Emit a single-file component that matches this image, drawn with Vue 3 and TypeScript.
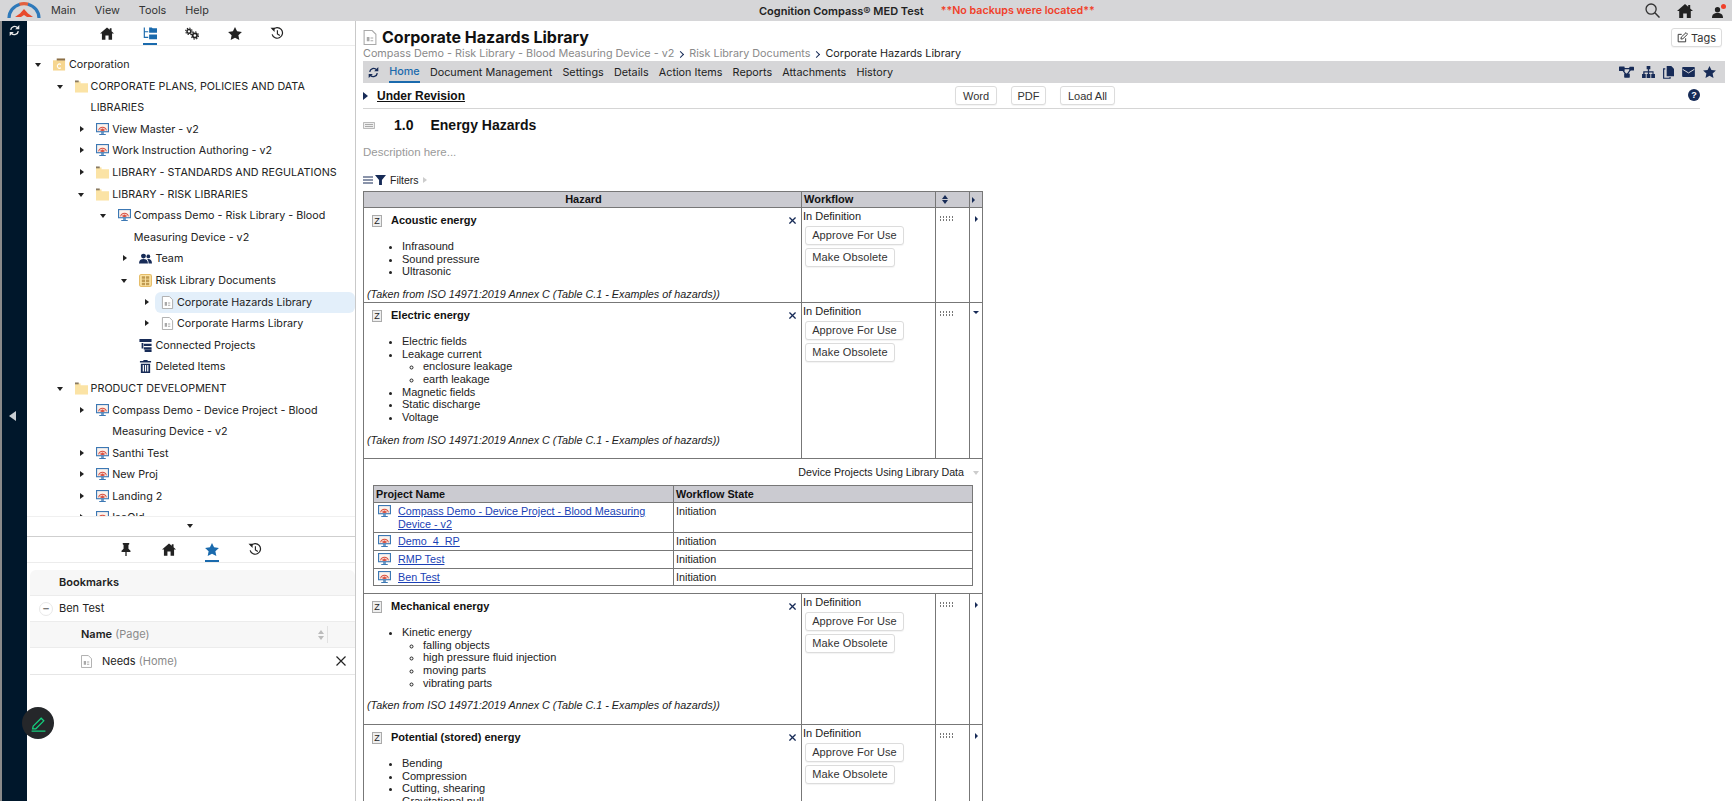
<script setup lang="ts">
interface TreeRow { level: number; arrow: '' | 'r' | 'd'; icon: string; label: string; active?: boolean }
interface ListItem { text: string; sub?: string[] }
interface Hazard { title: string; height: number; items: ListItem[]; open: boolean; note: boolean }

const menus = ['Main', 'View', 'Tools', 'Help']
const navTabs = ['Document Management', 'Settings', 'Details', 'Action Items', 'Reports', 'Attachments', 'History']
const tree: TreeRow[] = [
  { level: 0, arrow: 'd', icon: 'i-corp', label: 'Corporation' },
  { level: 1, arrow: 'd', icon: 'i-folder', label: 'CORPORATE PLANS, POLICIES AND DATA LIBRARIES' },
  { level: 2, arrow: 'r', icon: 'i-monitor', label: 'View Master - v2' },
  { level: 2, arrow: 'r', icon: 'i-monitor', label: 'Work Instruction Authoring - v2' },
  { level: 2, arrow: 'r', icon: 'i-folder', label: 'LIBRARY - STANDARDS AND REGULATIONS' },
  { level: 2, arrow: 'd', icon: 'i-folder', label: 'LIBRARY - RISK LIBRARIES' },
  { level: 3, arrow: 'd', icon: 'i-monitor', label: 'Compass Demo - Risk Library - Blood Measuring Device - v2' },
  { level: 4, arrow: 'r', icon: 'i-team', label: 'Team' },
  { level: 4, arrow: 'd', icon: 'i-docs', label: 'Risk Library Documents' },
  { level: 5, arrow: 'r', icon: 'i-doc', label: 'Corporate Hazards Library', active: true },
  { level: 5, arrow: 'r', icon: 'i-doc', label: 'Corporate Harms Library' },
  { level: 4, arrow: '', icon: 'i-conn', label: 'Connected Projects' },
  { level: 4, arrow: '', icon: 'i-trash', label: 'Deleted Items' },
  { level: 1, arrow: 'd', icon: 'i-folder', label: 'PRODUCT DEVELOPMENT' },
  { level: 2, arrow: 'r', icon: 'i-monitor', label: 'Compass Demo - Device Project - Blood Measuring Device - v2' },
  { level: 2, arrow: 'r', icon: 'i-monitor', label: 'Santhi Test' },
  { level: 2, arrow: 'r', icon: 'i-monitor', label: 'New Proj' },
  { level: 2, arrow: 'r', icon: 'i-monitor', label: 'Landing 2' },
  { level: 2, arrow: 'r', icon: 'i-monitor', label: 'IsoOld' }
]
const hazards: Hazard[] = [
  { title: 'Acoustic energy', height: 95, open: false, note: true, items: [{ text: 'Infrasound' }, { text: 'Sound pressure' }, { text: 'Ultrasonic' }] },
  { title: 'Electric energy', height: 156, open: true, note: true, items: [{ text: 'Electric fields' }, { text: 'Leakage current', sub: ['enclosure leakage', 'earth leakage'] }, { text: 'Magnetic fields' }, { text: 'Static discharge' }, { text: 'Voltage' }] },
  { title: 'Mechanical energy', height: 131, open: false, note: true, items: [{ text: 'Kinetic energy', sub: ['falling objects', 'high pressure fluid injection', 'moving parts', 'vibrating parts'] }] },
  { title: 'Potential (stored) energy', height: 131, open: false, note: false, items: [{ text: 'Bending' }, { text: 'Compression' }, { text: 'Cutting, shearing' }, { text: 'Gravitational pull' }] }
]
const projects = [
  { name: 'Compass Demo - Device Project - Blood Measuring Device - v2', h: 30 },
  { name: 'Demo_4_RP', h: 17 },
  { name: 'RMP Test', h: 17 },
  { name: 'Ben Test', h: 17 }
]
const note = '(Taken from ISO 14971:2019 Annex C (Table C.1 - Examples of hazards))'
</script>

<template>
  <div class="page">
    <svg class="defs" width="0" height="0" aria-hidden="true">
      <symbol id="i-home" viewBox="0 0 16 14"><path fill="currentColor" d="M8 0 0 7h2.200v7h4V9.400h3.600V14h4V7H16l-2.800-2.500V1h-2v1.700z"/></symbol>
      <symbol id="i-star" viewBox="0 0 16 15"><path fill="currentColor" d="m8 0 2.400 5 5.600.7-4.100 3.800 1.100 5.500L8 12.300 3 15l1.100-5.500L0 5.700 5.600 5z"/></symbol>
      <symbol id="i-tree" viewBox="0 0 16 14"><path fill="none" stroke="currentColor" stroke-width="1.300" d="M1.500 0v11.500H6M1.500 5H6"/><path fill="currentColor" d="M7 0h3l1 1h5v5H7zM7 8h9v5.500H7z"/></symbol>
      <symbol id="i-gears" viewBox="0 0 16 14">
        <circle cx="4.500" cy="4.500" r="2.200" fill="none" stroke="currentColor" stroke-width="1.700"/>
        <circle cx="4.500" cy="4.500" r="3.700" fill="none" stroke="currentColor" stroke-width="1.200" stroke-dasharray="1.500 1.400"/>
        <circle cx="11.300" cy="9.300" r="2.500" fill="none" stroke="currentColor" stroke-width="1.900"/>
        <circle cx="11.300" cy="9.300" r="4.100" fill="none" stroke="currentColor" stroke-width="1.300" stroke-dasharray="1.700 1.500"/>
      </symbol>
      <symbol id="i-history" viewBox="0 0 16 16"><path fill="none" stroke="currentColor" stroke-width="1.500" d="M3 3.500A6.500 6.500 0 1 1 2 9"/><path fill="currentColor" d="M0 1h5v5z"/><path fill="none" stroke="currentColor" stroke-width="1.400" d="M8.500 4v4.500l3 2"/></symbol>
      <symbol id="i-pin" viewBox="0 0 12 16"><path fill="currentColor" d="M2 0h8v1.500L9 2.500V7l2.500 2.500V11H6.800v5H5.200v-5H.5V9.500L3 7V2.500L2 1.500z"/></symbol>
      <symbol id="i-sync" viewBox="0 0 16 16"><path fill="none" stroke="currentColor" stroke-width="2" d="M2.500 7A5.700 5.700 0 0 1 12.500 4M13.500 9A5.700 5.700 0 0 1 3.500 12"/><path fill="currentColor" d="M15 0v6H9zM1 16v-6h6z"/></symbol>
      <symbol id="i-folder" viewBox="0 0 14 13"><path fill="#fbe3a5" d="M0 3h14v10H0z"/><path fill="#fbe3a5" d="M0 1h6v3H0z"/><path fill="#8a7a60" d="M0 0h4v2H0z"/></symbol>
      <symbol id="i-corp" viewBox="0 0 14 13"><path fill="#f6d690" d="M0 2h13v11H0z"/><path fill="#8c6f45" d="M4 0h9v2.200H4z"/><path fill="none" stroke="#fff" stroke-width="1.100" d="M8.500 6.500A2.300 2.300 0 1 0 8.500 10"/></symbol>
      <symbol id="i-monitor" viewBox="0 0 14 14"><path fill="#3c78b4" d="M0 0h14v10H0z"/><path fill="#fbf3ee" d="M1.200 1.200h11.600v7.600H1.200z"/><path fill="none" stroke="#d9503f" stroke-width="1.100" d="M2.800 8a4.300 4.300 0 0 1 8.400 0M4.800 8a2.300 2.300 0 0 1 4.400 0"/><path fill="#d9503f" d="m7 6 2 2.500H5z"/><path fill="#3c78b4" d="M5.500 10h3v1.500h-3zM3.500 11.800h7V13h-7z"/></symbol>
      <symbol id="i-team" viewBox="0 0 16 12"><circle cx="5.500" cy="3" r="3" fill="#172b57"/><path fill="#172b57" d="M0 12c0-4 2-5.500 5.500-5.500S11 8 11 12z"/><circle cx="11.500" cy="3.500" r="2.300" fill="#172b57"/><path fill="#172b57" d="M11.800 12c0-2.500-.6-4.300-1.800-5.300 3.500-.7 6 1 6 5.300z"/></symbol>
      <symbol id="i-docs" viewBox="0 0 14 14"><rect x=".6" y=".6" width="12.800" height="12.800" rx="1.800" fill="#fbe3a5" stroke="#e6bd69" stroke-width="1.200"/><path fill="#c09a51" d="M3 2.500h3.500V5H3zM7.500 2.500H11V5H7.500zM3 6h3.500v2.500H3zM7.500 6H11v2.500H7.500zM3 9.500h3.500V12H3zM7.500 9.500H11V12H7.500z"/></symbol>
      <symbol id="i-doc" viewBox="0 0 12 14"><path fill="#fff" stroke="#a9a9a9" stroke-width="1" d="M.5.500H8L11.500 4v9.500H.5z"/><path fill="#a9a9a9" d="M3 6.500h2.500v4H3zM6.500 7H9v1H6.500zM6.500 9.500H9v1H6.500z"/></symbol>
      <symbol id="i-conn" viewBox="0 0 14 15"><path fill="#172b57" d="M0 0h14v3.500H0zM2.500 4.500h2V11h-2z"/><path fill="#172b57" d="M5 5.500h9V8H5zM5 9.500h9V12H5zM6 12.500h8V15H6z"/></symbol>
      <symbol id="i-trash" viewBox="0 0 12 14"><path fill="#172b57" d="M4 0h4l.6 1.200H12v1.600H0V1.200h3.400zM1 4h10v10H1z"/><path fill="#fff" d="M3 5.500h1.300v7H3zM5.400 5.500h1.300v7H5.400zM7.800 5.500h1.300v7H7.800z"/></symbol>
      <symbol id="i-share" viewBox="0 0 16 12"><path fill="none" stroke="currentColor" stroke-width="1.300" d="M3 2.500h10M3 2.500 8 9.500M13 2.500 8 9.500"/><rect width="6" height="5" rx=".6" fill="currentColor"/><rect x="11" y=".5" width="5" height="4" rx=".6" fill="currentColor"/><rect x="5.500" y="7.500" width="6" height="4.500" rx=".6" fill="currentColor"/></symbol>
      <symbol id="i-org" viewBox="0 0 14 13"><path fill="currentColor" d="M5 0h4v3.500H7.700v2.200h4.800v3H14V13h-4V8.700h1.300V7H7.700v1.700H9V13H5V8.700h1.300V7H2.700v1.700H4V13H0V8.700h1.300v-3h5V3.500H5z"/></symbol>
      <symbol id="i-copy" viewBox="0 0 12 14"><path fill="currentColor" d="M4 0h5l3 3v8H4z"/><path fill="none" stroke="currentColor" stroke-width="1.300" d="M2.500 3H.7v10.300h7V12"/></symbol>
      <symbol id="i-mail" viewBox="0 0 14 11"><rect width="14" height="11" rx="1" fill="currentColor"/><path fill="none" stroke="#d6d6d8" stroke-width="1.100" d="m.5 2.500 6.500 4 6.500-4"/></symbol>
    </svg>

    <header class="topbar">
      <svg class="logo" viewBox="0 0 34 17">
        <path fill="none" stroke="#2e79ba" stroke-width="3.200" d="M2 16A15 14.500 0 0 1 13 2.200"/>
        <path fill="none" stroke="#e2603f" stroke-width="3.200" d="M12.500 2.300A15 14.500 0 0 1 21.500 2.300"/>
        <path fill="none" stroke="#2e79ba" stroke-width="3.200" d="M21 2.200A15 14.500 0 0 1 32 16"/>
        <path fill="#e8492c" d="m17 7 4 4.500 5 3.500H20l-3-2-3 2H8l5-3.500z"/>
      </svg>
      <nav class="menu"><span v-for="m in menus" :key="m">{{ m }}</span></nav>
      <div class="app-title">
        <strong>Cognition Compass® MED Test</strong>
        <strong class="warn">**No backups were located**</strong>
      </div>
      <div class="top-icons">
        <svg class="ic-search" viewBox="0 0 16 16"><circle cx="6.500" cy="6.500" r="5.400" fill="none" stroke="currentColor" stroke-width="1.400"/><path stroke="currentColor" stroke-width="1.600" d="m10.500 10.500 5 5"/></svg>
        <svg class="ic-home"><use href="#i-home"/></svg>
        <span class="user">
          <svg viewBox="0 0 12 12"><circle cx="6" cy="3" r="2.900" fill="currentColor"/><path fill="currentColor" d="M0 12c0-4 2-5.500 6-5.500s6 1.500 6 5.500z"/></svg>
          <i class="dot"></i>
        </span>
      </div>
    </header>

    <div class="main">
      <aside class="rail">
        <svg class="rail-sync"><use href="#i-sync"/></svg>
        <span class="rail-arrow"></span>
      </aside>

      <section class="side">
        <div class="tabs tree-tabs">
          <svg><use href="#i-home"/></svg>
          <span class="tab-on"><svg><use href="#i-tree"/></svg></span>
          <svg><use href="#i-gears"/></svg>
          <svg><use href="#i-star"/></svg>
          <svg><use href="#i-history"/></svg>
        </div>
        <div class="tree">
          <div v-for="r in tree" :key="r.label" class="node" :style="{ paddingLeft: 8 + r.level * 21.6 + 'px' }">
            <span class="arrow" :class="r.arrow"></span>
            <span class="node-body" :class="{ active: r.active }">
              <svg class="node-icon"><use :href="'#' + r.icon"/></svg>
              <span class="node-label">{{ r.label }}</span>
            </span>
          </div>
        </div>
        <div class="tree-foot"><span class="arrow d"></span></div>
        <div class="tabs book-tabs">
          <svg class="pin"><use href="#i-pin"/></svg>
          <svg><use href="#i-home"/></svg>
          <span class="tab-on blue"><svg><use href="#i-star"/></svg></span>
          <svg><use href="#i-history"/></svg>
        </div>
        <div class="bookmarks">
          <div class="b-head">Bookmarks</div>
          <div class="b-row"><span class="minus">–</span>Ben Test</div>
          <div class="b-sub">
            <span><b>Name</b> <em>(Page)</em></span>
            <span class="sort-mini"><i></i><i></i></span>
          </div>
          <div class="b-item">
            <svg class="b-doc"><use href="#i-doc"/></svg>
            <span>Needs <em>(Home)</em></span>
            <svg class="b-x" viewBox="0 0 10 10"><path stroke="currentColor" stroke-width="1.200" d="m.5.500 9 9M9.500.500l-9 9"/></svg>
          </div>
        </div>
        <div class="fab">
          <svg viewBox="0 0 16 16"><path fill="none" stroke="#14d07e" stroke-width="1.200" d="M3 10.500 10.500 3 13 5.500 5.500 13h-3zM1.500 15.200h13"/></svg>
        </div>
      </section>

      <main class="content">
        <div class="title-row">
          <svg class="title-doc"><use href="#i-doc"/></svg>
          <h1>Corporate Hazards Library</h1>
          <button class="btn tags">
            <svg viewBox="0 0 14 14"><path fill="none" stroke="currentColor" stroke-width="1.200" d="M11 8v4.500H1.500V3H6"/><path fill="none" stroke="currentColor" stroke-width="1.200" d="m5 9 .5-2.500L11.500.8l2 2-6 5.800z"/></svg>
            Tags
          </button>
        </div>
        <div class="crumbs">
          <span>Compass Demo - Risk Library - Blood Measuring Device - v2</span>
          <i class="chev"></i><span>Risk Library Documents</span>
          <i class="chev"></i><span class="cur">Corporate Hazards Library</span>
        </div>
        <nav class="navbar">
          <svg class="nav-sync"><use href="#i-sync"/></svg>
          <span class="nav-home">Home</span>
          <span v-for="t in navTabs" :key="t">{{ t }}</span>
          <div class="nav-icons">
            <svg class="a"><use href="#i-share"/></svg>
            <svg class="b"><use href="#i-org"/></svg>
            <svg class="c"><use href="#i-copy"/></svg>
            <svg class="d"><use href="#i-mail"/></svg>
            <svg class="e"><use href="#i-star"/></svg>
          </div>
        </nav>
        <div class="revision">
          <span class="tri"></span>
          <span class="rev-label">Under Revision</span>
          <div class="rev-btns">
            <button class="btn word">Word</button>
            <button class="btn pdf">PDF</button>
            <button class="btn load">Load All</button>
          </div>
          <span class="help">?</span>
        </div>
        <div class="section">
          <svg class="sec-ic" viewBox="0 0 12 7"><path fill="#eee" stroke="#aaa" stroke-width=".8" d="M.5.500h11v6H.5z"/><path stroke="#aaa" d="M2 2.500h8M2 4.500h8"/></svg>
          <span class="num">1.0</span><span>Energy Hazards</span>
        </div>
        <div class="desc">Description here...</div>
        <div class="filters">
          <svg class="burger" viewBox="0 0 10 8"><path stroke="#172b57" stroke-width="1.200" d="M0 1h10M0 4h10M0 7h10"/></svg>
          <svg class="funnel" viewBox="0 0 10 9"><path fill="#172b57" d="M0 0h10L6.300 4.500V9H3.700V4.500z"/></svg>
          <span>Filters</span>
          <span class="f-tri"></span>
        </div>

        <table class="grid">
          <colgroup><col class="c1"><col class="c2"><col class="c3"><col class="c4"></colgroup>
          <thead>
            <tr>
              <th class="center">Hazard</th><th>Workflow</th>
              <th class="sort-th"><span class="sort-big"><i></i><i></i></span></th>
              <th class="exp-th"><span class="mini-r"></span></th>
            </tr>
          </thead>
          <tbody>
            <template v-for="h in hazards" :key="h.title">
              <tr>
                <td class="hz" :style="{ height: h.height + 'px' }" :class="{ 'no-bottom': h.open }">
                  <div class="hz-head">
                    <span class="z">Z</span><b>{{ h.title }}</b>
                    <svg class="hz-x" viewBox="0 0 8 8"><path stroke="#172b57" stroke-width="1.500" d="m.5.500 7 7M7.500.500l-7 7"/></svg>
                  </div>
                  <ul>
                    <li v-for="it in h.items" :key="it.text">
                      {{ it.text }}
                      <ul v-if="it.sub"><li v-for="s in it.sub" :key="s">{{ s }}</li></ul>
                    </li>
                  </ul>
                  <p v-if="h.note" class="note">{{ note }}</p>
                </td>
                <td class="wf" :class="{ 'no-bottom': h.open }">
                  <div>In Definition</div>
                  <button class="btn wf-btn">Approve For Use</button>
                  <button class="btn wf-btn">Make Obsolete</button>
                </td>
                <td class="gr" :class="{ 'no-bottom': h.open }"><span class="grip"></span></td>
                <td class="ex" :class="{ 'no-bottom': h.open }"><span :class="h.open ? 'mini-d' : 'mini-r'"></span></td>
              </tr>
              <tr v-if="h.open">
                <td colspan="4" class="nested-cell">
                  <div class="nested-title">Device Projects Using Library Data <span class="gray-d"></span></div>
                  <table class="nested">
                    <colgroup><col class="n1"><col></colgroup>
                    <thead><tr><th>Project Name</th><th>Workflow State</th></tr></thead>
                    <tbody>
                      <tr v-for="p in projects" :key="p.name" :style="{ height: p.h + 'px' }">
                        <td class="pn"><svg class="pn-ic"><use href="#i-monitor"/></svg><a href="#">{{ p.name }}</a></td>
                        <td>Initiation</td>
                      </tr>
                    </tbody>
                  </table>
                </td>
              </tr>
            </template>
          </tbody>
        </table>
      </main>
    </div>
  </div>
</template>

<style>
html, body { margin: 0; padding: 0; background: #fff; }
</style>

<style scoped>
.page { width: 1732px; height: 801px; overflow: hidden; display: flex; flex-direction: column; font-family: Inter, "Liberation Sans", sans-serif; color: #222; background: #fff; }
.defs { position: absolute; }
svg { display: block; }

.topbar { height: 21px; flex: none; background: #d6d6d8; display: flex; align-items: center; position: relative; }
.logo { width: 34px; height: 17px; margin: 0 0 0 7px; flex: none; }
.menu { display: flex; gap: 19px; margin-left: 10px; font-size: 10.800px; color: #333; }
.app-title { position: absolute; left: 759px; display: flex; gap: 17px; align-items: center; font-size: 11px; }
.app-title strong { font-weight: 600; color: #222; }
.app-title .warn { color: #f0402a; font-weight: 600; font-size: 10.700px; }
.top-icons { position: absolute; right: 0; top: 0; height: 21px; display: flex; align-items: center; }
.ic-search { width: 15px; height: 15px; color: #333; margin-right: 17px; }
.ic-home { width: 16px; height: 14px; color: #222; margin-right: 19px; }
.user { width: 11px; height: 12px; margin-right: 9px; position: relative; color: #222; }
.user svg { width: 11px; height: 11px; margin-top: 2px; }
.dot { position: absolute; top: -1px; right: -3px; width: 5px; height: 5px; border-radius: 50%; background: #f0402a; }

.main { flex: 1; min-height: 0; display: flex; }
.rail { width: 25px; margin-left: 2px; flex: none; background: #00172b; position: relative; box-shadow: -2px 0 0 #8a8a8a; }
.rail-sync { width: 11px; height: 11px; color: #e8e8e8; position: absolute; left: 7px; top: 4px; }
.rail-arrow { position: absolute; left: 7px; top: 390px; border-style: solid; border-width: 5px 7px 5px 0; border-color: transparent #c8ced4 transparent transparent; }

.side { width: 328px; flex: none; border-right: 1px solid #c9c9c9; position: relative; display: flex; flex-direction: column; }
.tabs { flex: none; display: flex; align-items: center; position: relative; color: #222; border-bottom: 1px solid #ececec; }
.tabs svg { width: 14px; height: 13px; }
.tree-tabs { height: 24px; padding-left: 73px; gap: 28.500px; }
.tab-on { display: flex; height: 100%; align-items: center; color: #1a6aad; position: relative; }
.tab-on::after { content: ""; position: absolute; left: 0; right: 0; bottom: 0; height: 2px; background: #1a6aad; }
.tree { height: 470px; flex: none; overflow: hidden; padding-top: 8px; box-sizing: border-box; font-size: 10.750px; line-height: 21.600px; }
.node { display: flex; align-items: flex-start; }
.arrow { width: 16px; height: 21.600px; flex: none; position: relative; margin-right: 0; }
.arrow.r::before { content: ""; position: absolute; left: 2px; top: 7px; border-style: solid; border-width: 3.500px 0 3.500px 4px; border-color: transparent transparent transparent #222; }
.arrow.d::before { content: ""; position: absolute; left: 0; top: 9px; border-style: solid; border-width: 4px 3.500px 0; border-color: #222 transparent transparent; }
.node-body { flex: 1; display: flex; align-items: flex-start; min-width: 0; padding-left: 2px; }
.node-body.active { background: #e3effa; border-radius: 6px; margin-left: -4px; padding-left: 6px; }
.node-icon { width: 13px; height: 13px; flex: none; margin: 4px 3px 0 0; }
.node-label { display: block; max-width: 228px; }
.tree-foot { height: 19px; flex: none; border-top: 1px solid #f0f0f0; border-bottom: 1px solid #cfcfcf; position: relative; display: flex; justify-content: center; }
.tree-foot .arrow { width: 8px; height: 18px; }
.tree-foot .arrow.d::before { top: 7px; }
.book-tabs { height: 25px; padding-left: 94px; gap: 29px; }
.book-tabs .pin { width: 10px; height: 13px; margin-right: 2px; }
.bookmarks { margin: 7px 0 0 3px; font-size: 11px; color: #222; }
.b-head { height: 25px; line-height: 25px; padding-left: 29px; font-weight: 600; background: #f7f7f7; border-bottom: 1px solid #ececec; border-radius: 6px 6px 0 0; }
.b-row { height: 25px; line-height: 25px; padding-left: 29px; border-bottom: 1px solid #ececec; position: relative; }
.minus { position: absolute; left: 9px; top: 6px; width: 12px; height: 12px; border: 1px solid #e8e8e8; border-radius: 50%; line-height: 11px; text-align: center; color: #777; font-weight: 700; }
.b-sub { height: 25px; line-height: 25px; padding-left: 51px; background: #f7f7f7; border-bottom: 1px solid #ececec; display: flex; justify-content: space-between; padding-right: 31px; position: relative; }
.b-sub::after { content: ""; position: absolute; right: 27px; top: 4px; bottom: 4px; width: 1px; background: #e2e2e2; }
.b-sub b { font-weight: 600; }
em { font-style: normal; color: #8a8a8a; }
.sort-mini { display: flex; flex-direction: column; gap: 2px; justify-content: center; }
.sort-mini i:first-child { border-style: solid; border-width: 0 3.500px 4px; border-color: transparent transparent #bbb; }
.sort-mini i:last-child { border-style: solid; border-width: 4px 3.500px 0; border-color: #bbb transparent transparent; }
.b-item { height: 26px; padding-left: 51px; border-bottom: 1px solid #e6e6e6; display: flex; align-items: center; position: relative; }
.b-doc { width: 11px; height: 13px; margin-right: 10px; }
.b-x { position: absolute; right: 9px; top: 8px; width: 10px; height: 10px; color: #222; }
.fab { position: absolute; left: -5px; top: 686px; width: 32px; height: 32px; border-radius: 50%; background: #25272a; display: flex; align-items: center; justify-content: center; z-index: 2; }
.fab svg { width: 17px; height: 17px; }

.content { flex: 1; min-width: 0; padding-left: 7px; overflow: hidden; font-family: "Liberation Sans", Arial, sans-serif; }
.title-row { height: 26px; display: flex; align-items: center; position: relative; padding-top: 6px; box-sizing: border-box; }
.title-doc { width: 14px; height: 15px; margin-right: 5px; }
h1 { margin: 0; font-family: Inter, "Liberation Sans", sans-serif; font-size: 16px; font-weight: 700; color: #111; }
.btn { font-family: "Liberation Sans", Arial, sans-serif; background: #fff; border: 1px solid #dcdcdc; border-radius: 3px; color: #333; padding: 0; margin: 0; box-shadow: 0 1px 1px rgba(0, 0, 0, .05); }
.tags { position: absolute; left: 1308px; top: 7px; width: 51px; height: 19px; display: flex; align-items: center; justify-content: center; gap: 3px; font-size: 11px; font-family: Inter, sans-serif; }
.tags svg { width: 11px; height: 11px; }
.crumbs { height: 14px; line-height: 14px; display: flex; align-items: center; font-family: Inter, "Liberation Sans", sans-serif; font-size: 10.800px; color: #8a8a8a; }
.crumbs .cur { color: #222; }
.chev { width: 4px; height: 4px; border-top: 1.300px solid #172b57; border-right: 1.300px solid #172b57; transform: rotate(45deg); margin: 0 6px 0 4px; }
.navbar { height: 22px; width: 1362px; background: #d6d6d8; display: flex; align-items: center; gap: 10.200px; font-family: Inter, "Liberation Sans", sans-serif; font-size: 10.800px; color: #222; position: relative; box-sizing: border-box; padding-left: 5px; }
.nav-sync { width: 11px; height: 11px; color: #172b57; }
.nav-home { color: #1a6aad; font-weight: 500; height: 22px; line-height: 22px; box-sizing: border-box; border-bottom: 2px solid #1a6aad; }
.nav-icons { position: absolute; left: 0; top: 0; width: 100%; height: 22px; color: #172b57; pointer-events: none; display: flex; align-items: center; justify-content: flex-end; gap: 8px; padding-right: 9.500px; box-sizing: border-box; }
.nav-icons svg { height: 12px; }
.nav-icons .a { width: 15px; } .nav-icons .b { width: 13px; } .nav-icons .c { width: 11px; height: 13px; } .nav-icons .d { width: 13px; height: 10px; } .nav-icons .e { width: 13px; }
.revision { height: 25px; width: 1337px; border-bottom: 1px solid #d5d5d5; display: flex; align-items: center; position: relative; }
.tri { border-style: solid; border-width: 4px 0 4px 5px; border-color: transparent transparent transparent #172b57; margin-right: 9px; }
.rev-label { font-weight: 700; font-size: 12px; text-decoration: underline; color: #111; }
.rev-btns { position: absolute; left: 592px; top: 3px; display: flex; gap: 14px; }
.rev-btns .btn { height: 19px; font-size: 11px; box-sizing: border-box; }
.word { width: 42px; } .pdf { width: 35px; } .load { width: 55px; }
.help { position: absolute; left: 1325px; top: 6px; width: 12px; height: 12px; border-radius: 50%; background: #172b57; color: #fff; font-size: 9px; font-weight: 700; text-align: center; line-height: 12px; }
.section { height: 32px; display: flex; align-items: center; font-size: 14px; font-weight: 700; color: #111; }
.sec-ic { width: 12px; height: 7px; margin-right: 19px; }
.num { margin-right: 17px; }
.desc { height: 23px; line-height: 23px; font-size: 11.500px; color: #9a9a9a; }
.filters { height: 16px; margin-top: 8px; display: flex; align-items: center; font-size: 10.500px; color: #222; }
.burger { width: 10px; height: 8px; margin-right: 2px; }
.funnel { width: 11px; height: 10px; margin-right: 4px; }
.f-tri { margin-left: 4px; border-style: solid; border-width: 3.500px 0 3.500px 4px; border-color: transparent transparent transparent #ccc; }

.grid { border-collapse: collapse; table-layout: fixed; width: 619px; margin: 3px 0 0 0; font-size: 11px; line-height: 12.670px; color: #222; }
.c1 { width: 438px; } .c2 { width: 134px; } .c3 { width: 34px; } .c4 { width: 13px; }
.grid th, .grid td { border: 1px solid #777; padding: 0; }
.grid > thead th { height: 16px; background: #cbcbd1; font-weight: 700; font-size: 11px; text-align: left; padding-left: 2px; color: #111; box-sizing: border-box; }
.grid > thead th.center { text-align: center; }
.sort-big { display: flex; flex-direction: column; align-items: center; gap: 1px; width: 14px; }
.sort-big i:first-child { border-style: solid; border-width: 0 3.500px 4px; border-color: transparent transparent #172b57; }
.sort-big i:last-child { border-style: solid; border-width: 4px 3.500px 0; border-color: #172b57 transparent transparent; }
.mini-r, .mini-d { display: inline-block; }
.mini-r { border-style: solid; border-width: 3px 0 3px 3.500px; border-color: transparent transparent transparent #172b57; }
.mini-d { border-style: solid; border-width: 3.500px 3px 0; border-color: #172b57 transparent transparent; }
.grid td { vertical-align: top; box-sizing: border-box; }
.hz { padding: 0 3px !important; }
.grid td.no-bottom { border-bottom: 1px dashed #777; }
.hz-head { display: flex; align-items: center; height: 13px; margin-top: 6px; position: relative; font-size: 11px; padding-left: 5px; }
.z { width: 8px; height: 10px; border: 1px solid #aaa; background: #eee; font-size: 9px; line-height: 10px; text-align: center; margin-right: 9px; font-weight: 400; color: #222; }
.hz-head b { color: #111; }
.hz-x { position: absolute; right: 2px; top: 3px; width: 7px; height: 7px; }
.grid ul { margin: 13px 0 10px; padding: 0 0 0 35px; }
.grid ul ul { margin: 0; padding-left: 21px; list-style: circle; }
.note { margin: 0; font-style: italic; font-size: 10.800px; }
.wf { padding-left: 1px !important; padding-top: 2px !important; }
.wf-btn { display: block; height: 19px; width: 99px; margin: 3px 0 0 2px; font-size: 11px; box-sizing: border-box; letter-spacing: .1px; }
.wf-btn + .wf-btn { width: 90px; }
.gr, .ex { text-align: center; }
.grip { display: block; width: 13px; height: 5px; margin: 8px 0 0 4px; background-image: linear-gradient(to right, #777 50%, transparent 50%), linear-gradient(to right, #777 50%, transparent 50%); background-size: 3px 1.500px; background-repeat: repeat-x; background-position: 0 0, 0 3px; }
.ex span { margin-top: 8px; }
.nested-cell { height: 135px; padding: 0 !important; }
.nested-title { text-align: right; height: 26px; line-height: 27px; padding-right: 3px; font-size: 10.700px; color: #222; }
.gray-d { display: inline-block; margin-left: 6px; vertical-align: 1px; border-style: solid; border-width: 4px 3.500px 0; border-color: #ccc transparent transparent; }
.nested { border-collapse: collapse; table-layout: fixed; width: 600px; margin-left: 9px; font-size: 10.800px; }
.n1 { width: 300px; }
.nested th, .nested td { border: 1px solid #777; padding: 2px; }
.nested th { background: #cbcbd1; text-align: left; font-weight: 700; color: #111; height: 17px; box-sizing: border-box; padding: 0 2px; }
.nested td.pn { position: relative; padding-left: 24px; }
.pn-ic { position: absolute; left: 4px; top: 2px; width: 13px; height: 13px; }
.nested a { color: #1a3fb5; text-decoration: underline; }
</style>
